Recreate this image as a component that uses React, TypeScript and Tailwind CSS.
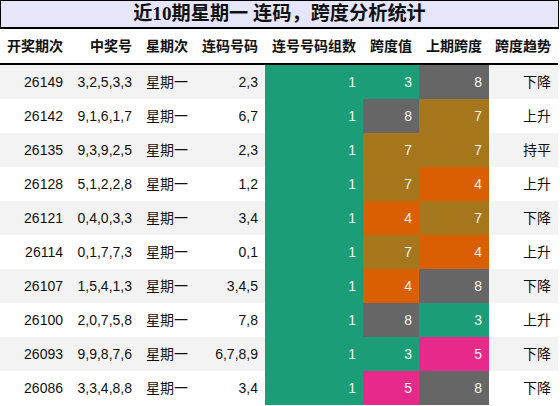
import React from 'react';

type Row = {
  issue: string;
  nums: string;
  day: string;
  links: string;
  groups: number;
  span: number;
  prev: number;
  trend: string;
};

const rows: Row[] = [
  { issue: '26149', nums: '3,2,5,3,3', day: '星期一', links: '2,3', groups: 1, span: 3, prev: 8, trend: '下降' },
  { issue: '26142', nums: '9,1,6,1,7', day: '星期一', links: '6,7', groups: 1, span: 8, prev: 7, trend: '上升' },
  { issue: '26135', nums: '9,3,9,2,5', day: '星期一', links: '2,3', groups: 1, span: 7, prev: 7, trend: '持平' },
  { issue: '26128', nums: '5,1,2,2,8', day: '星期一', links: '1,2', groups: 1, span: 7, prev: 4, trend: '上升' },
  { issue: '26121', nums: '0,4,0,3,3', day: '星期一', links: '3,4', groups: 1, span: 4, prev: 7, trend: '下降' },
  { issue: '26114', nums: '0,1,7,7,3', day: '星期一', links: '0,1', groups: 1, span: 7, prev: 4, trend: '上升' },
  { issue: '26107', nums: '1,5,4,1,3', day: '星期一', links: '3,4,5', groups: 1, span: 4, prev: 8, trend: '下降' },
  { issue: '26100', nums: '2,0,7,5,8', day: '星期一', links: '7,8', groups: 1, span: 8, prev: 3, trend: '上升' },
  { issue: '26093', nums: '9,9,8,7,6', day: '星期一', links: '6,7,8,9', groups: 1, span: 3, prev: 5, trend: '下降' },
  { issue: '26086', nums: '3,3,4,8,8', day: '星期一', links: '3,4', groups: 1, span: 5, prev: 8, trend: '下降' },
];

// cell colour by value (Dark2-ish palette)
const colorOf: Record<number, string> = {
  1: 'bg-[#1b9e77]',
  3: 'bg-[#1b9e77]',
  4: 'bg-[#d95f02]',
  5: 'bg-[#e7298a]',
  7: 'bg-[#a6761d]',
  8: 'bg-[#666666]',
};

const cols = 'grid grid-cols-[70px_69px_56px_70px_98px_56px_70px_69px]';
const headers = ['开奖期次', '中奖号', '星期次', '连码号码', '连号号码组数', '跨度值', '上期跨度', '跨度趋势'];

export default function App() {
  return (
    <div className="w-[560px] h-[406px] bg-white overflow-hidden font-['Liberation_Sans','Noto_Sans_CJK_SC',sans-serif] text-[14px] text-[#111]">
      <div className="w-[559px] h-[29px] border border-b-2 border-black bg-[#e6e6fa] flex items-center justify-center font-bold text-[19.2px] font-['Liberation_Serif','Noto_Sans_CJK_SC',serif] leading-none">
        近10期星期一 连码，跨度分析统计
      </div>
      <div className={`${cols} w-[558px] h-[36px] border-b-2 border-black font-bold`}>
        {headers.map((h, i) => (
          <div key={h} className={`flex items-center whitespace-nowrap px-[7px] ${i === 2 ? 'justify-start' : 'justify-end'}`}>
            {h}
          </div>
        ))}
      </div>
      {rows.map((r, i) => (
        <div key={r.issue} className={`${cols} w-[558px] h-[34px] ${i % 2 === 0 ? 'bg-[#f3f3f3]' : 'bg-white'}`}>
          <div className="flex items-center justify-end px-[7px]">{r.issue}</div>
          <div className="flex items-center justify-end px-[7px]">{r.nums}</div>
          <div className="flex items-center justify-start px-[7px]">{r.day}</div>
          <div className="flex items-center justify-end px-[7px]">{r.links}</div>
          <div className={`flex items-center justify-end px-[7px] text-[#f2f2f2] ${colorOf[r.groups]}`}>{r.groups}</div>
          <div className={`flex items-center justify-end px-[7px] text-[#f2f2f2] ${colorOf[r.span]}`}>{r.span}</div>
          <div className={`flex items-center justify-end px-[7px] text-[#f2f2f2] ${colorOf[r.prev]}`}>{r.prev}</div>
          <div className="flex items-center justify-end whitespace-nowrap px-[7px]">{r.trend}</div>
        </div>
      ))}
    </div>
  );
}
